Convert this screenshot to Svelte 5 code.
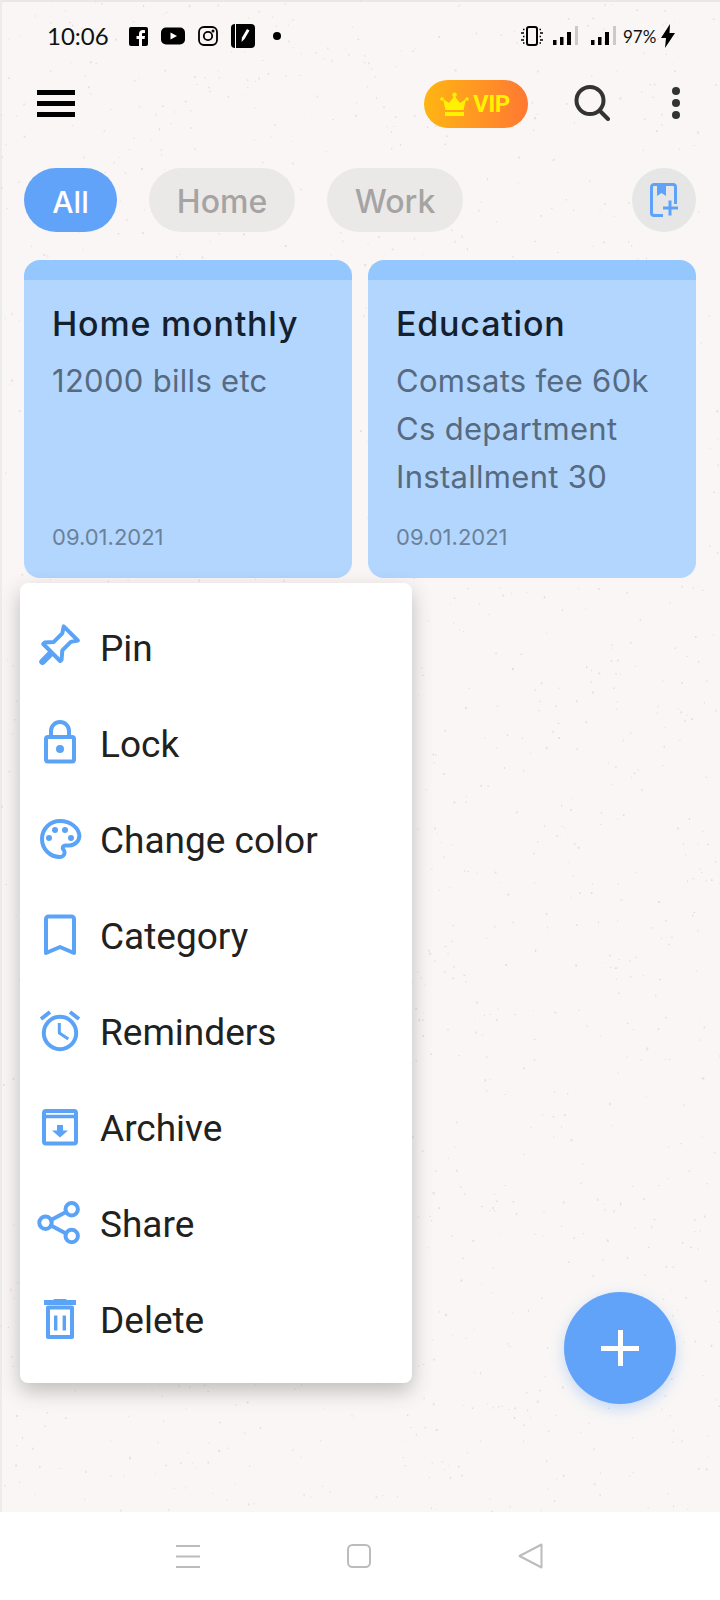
<script>
  let s = 12345;
  const r = () => ((s = (s * 16807) % 2147483647) - 1) / 2147483646;
  function speck(n, size) {
    let d = '';
    for (let i = 0; i < n; i++) {
      const x = (r() * 720).toFixed(1), y = (r() * 1512).toFixed(1);
      const w = (size * (0.6 + r())).toFixed(1), h = (size * (0.6 + r() * 1.4)).toFixed(1);
      d += `M${x} ${y}h${w}v${h}h-${w}z`;
    }
    return d;
  }
  const grey = speck(1500, 1.1);
  const pink = speck(300, 1.3);
  const rows = ['Pin', 'Lock', 'Change color', 'Category', 'Reminders', 'Archive', 'Share', 'Delete'];
</script>

<div class="page">
  <div class="paper">
    <svg class="speckle" width="720" height="1512" viewBox="0 0 720 1512" aria-hidden="true">
      <path d={grey} fill="#e2dedb" />
      <path d={pink} fill="#efdfdf" />
    </svg>

    <div class="status">
      <div class="status-side">
        <span class="time">10:06</span>
        <svg class="s-fb" width="19" height="19" viewBox="0 0 19 19"><rect width="19" height="19" rx="2" fill="#000"/><path d="M13 19v-7h2.600l.4-3h-3V7.300c0-.9.300-1.400 1.500-1.400H16V3.200c-.5-.1-1.300-.2-2.200-.2-2.300 0-3.800 1.400-3.800 3.900V9H7.500v3H10v7z" fill="#fff"/></svg>
        <svg class="s-yt" width="24" height="18" viewBox="0 0 24 18"><rect width="24" height="17" y=".5" rx="5" fill="#000"/><path d="M9.500 5.500 16 9l-6.500 3.500z" fill="#fff"/></svg>
        <svg class="s-ig" width="20" height="20" viewBox="0 0 20 20" fill="none" stroke="#000" stroke-width="1.800"><rect x="1" y="1" width="18" height="18" rx="5"/><circle cx="10" cy="10" r="4.200"/><circle cx="15" cy="5" r=".6" fill="#000"/></svg>
        <svg class="s-note" width="24" height="24" viewBox="0 0 24 24"><rect width="24" height="24" rx="4" fill="#000"/><path d="M4.500 0v24" stroke="#fff" stroke-width="1"/><path d="M10.500 18l.5-4.500 5-8.500 2.500 1.500-5 8.500z" fill="#fff"/></svg>
        <span class="s-dot"></span>
      </div>
      <div class="status-side">
        <svg class="s-vib" width="24" height="20" viewBox="0 0 24 20" fill="none" stroke="#000"><rect x="7" y="1" width="10" height="18" rx="2" stroke-width="2"/><path d="M3 3.500h1.500M1 7h3M3 10.500h1.500M1 14h3M3 17h1.500M19.500 3.500H21M20 7h3M19.500 10.500H21M20 14h3M19.500 17H21" stroke-width="1.500"/></svg>
        <svg class="s-sig1" width="26" height="20" viewBox="0 0 26 20"><path d="M0 14h3.500v5H0zM7 11h3.500v8H7zM14 6h4v13h-4z" fill="#000"/><rect x="22" y="0" width="3" height="19" fill="#ccc9c7"/></svg>
        <svg class="s-sig2" width="26" height="20" viewBox="0 0 26 20"><path d="M0 14h3.500v5H0zM7 11h3.500v8H7zM14 6h4v13h-4z" fill="#000"/><rect x="22" y="0" width="3" height="19" fill="#ccc9c7"/></svg>
        <span class="pct">97%</span>
        <svg class="s-bolt" width="14" height="24" viewBox="0 0 14 24"><path d="M9 0 0 14h5l-1 10 10-15H8.500z" fill="#000"/></svg>
      </div>
    </div>

    <div class="appbar">
      <div class="burger"><i></i><i></i><i></i></div>
      <div class="vip">
        <svg width="29" height="25" viewBox="0 0 29 25"><path d="M14.500 4 20 11l6-4-2.500 11h-18L3 7l6 4z" fill="#fff200"/><circle cx="14.500" cy="2.800" r="2.300" fill="#fff200"/><circle cx="2" cy="7" r="1.800" fill="#fff200"/><circle cx="27" cy="7" r="1.800" fill="#fff200"/><rect x="5" y="20" width="19" height="4" fill="#fff200"/></svg>
        <span>VIP</span>
      </div>
      <svg class="search" width="36" height="36" viewBox="0 0 36 36" fill="none" stroke="#333" stroke-width="4" stroke-linecap="round"><circle cx="16" cy="15.500" r="13.500"/><path d="M26 26l8 8"/></svg>
      <div class="more"><i></i><i></i><i></i></div>
    </div>

    <div class="chips">
      <span class="chip on c-all">All</span>
      <span class="chip c-home">Home</span>
      <span class="chip c-work">Work</span>
      <span class="chip-add">
        <svg width="28" height="34" viewBox="0 0 28 34" fill="none" stroke="#5ea3f8" stroke-width="3"><path d="M13 32.500H4a2.500 2.500 0 0 1-2.500-2.500V4A2.500 2.500 0 0 1 4 1.500h19A2.500 2.500 0 0 1 25.500 4v17"/><path d="M7 2h9v11l-4.500-3L7 13z" fill="#5ea3f8" stroke="none"/><path d="M13 25h15M20 17.500v15"/></svg>
      </span>
    </div>

    <div class="cards">
      <article class="card">
        <h2>Home monthly</h2>
        <p>12000 bills etc</p>
        <time>09.01.2021</time>
      </article>
      <article class="card">
        <h2>Education</h2>
        <p>Comsats fee 60k<br />Cs department<br />Installment 30</p>
        <time>09.01.2021</time>
      </article>
    </div>

    <ul class="menu">
      {#each rows as label, i}
        <li>
          <svg class="ico" width="48" height="48" viewBox="0 0 48 48" fill="none" stroke="#5aa3f7" stroke-width="4" stroke-linecap="round" stroke-linejoin="round">
            {#if i === 0}
              <g transform="translate(15.700 29.500) rotate(45)">
                <path d="M-10-27H10L6-21V-9L12-2V0H-12V-2L-6-9V-21Z"/>
                <path d="M0 2V13" stroke-width="6.500"/>
              </g>
            {:else if i === 1}
              <rect x="10" y="18" width="28" height="24.500" rx="2"/>
              <path d="M15 18v-6a9 9 0 0 1 18 0v6"/>
              <circle cx="24" cy="30" r="4" fill="#5aa3f7" stroke="none"/>
            {:else if i === 2}
              <path d="M24 6C13.900 6 6 14 6 24S13.900 42 24 42c2.500 0 4.600-2 4.600-4.500 0-1.200-.5-2.200-1.200-3-.7-.9-.8-2.100-.2-3 .5-.7 1.300-1.100 2.200-1.100h4c5.500 0 10-4.500 10-9.700C43 13 34.500 6 24 6z"/>
              <g fill="#5aa3f7" stroke="none"><circle cx="13" cy="23" r="3"/><circle cx="19" cy="15" r="3"/><circle cx="29" cy="15" r="3"/><circle cx="35" cy="23" r="3"/></g>
            {:else if i === 3}
              <path d="M10 42V8a2.500 2.500 0 0 1 2.500-2.500h23A2.500 2.500 0 0 1 38 8v34L24 36z"/>
            {:else if i === 4}
              <circle cx="24" cy="26" r="16.200"/>
              <path d="M5 12l9-7M43 12l-9-7" stroke-linecap="butt"/>
              <path d="M23.300 16v10l9 6" stroke-width="3" stroke-linecap="butt"/>
            {:else if i === 5}
              <rect x="8" y="8" width="32" height="32.500" rx="2"/>
              <path d="M8 13.500h32" stroke-width="3.500"/>
              <path d="M21 22h6v5.500h5l-8 7-8-7h5z" fill="#5aa3f7" stroke="none"/>
            {:else if i === 6}
              <circle cx="35.700" cy="10.300" r="6.200"/>
              <circle cx="9.500" cy="23.700" r="6.200"/>
              <circle cx="35.700" cy="37" r="6.200"/>
              <path d="M15 21l15-8M15 26.500l15 8" />
            {:else}
              <path d="M8 7.500h32" stroke-width="5" stroke-linecap="butt"/>
              <path d="M17 6c0-1.500 1-2 2-2h10c1 0 2 .5 2 2z" fill="#5aa3f7" stroke="none"/>
              <path d="M12 12.500h24V42H12z"/>
              <path d="M19.700 20.500v15M28.300 20.500v15" stroke-width="3.400" stroke-linecap="butt"/>
            {/if}
          </svg>
          <span>{label}</span>
        </li>
      {/each}
    </ul>

    <div class="fab"><i></i><i></i></div>
  </div>

  <nav class="nav">
    <svg width="24" height="23" viewBox="0 0 24 23" stroke="#bcbcbc" stroke-width="2"><path d="M0 1h24M0 11.500h24M0 22h24"/></svg>
    <svg width="24" height="24" viewBox="0 0 24 24" fill="none" stroke="#bcbcbc" stroke-width="2"><rect x="1" y="1" width="22" height="22" rx="4.500"/></svg>
    <svg width="25" height="26" viewBox="0 0 25 26" fill="none" stroke="#bcbcbc" stroke-width="2" stroke-linejoin="round"><path d="M1.500 13 23.500 1.500v23z"/></svg>
  </nav>
</div>

<style>
  :global(body) { margin: 0; background: #f9f6f5; }
  * { box-sizing: border-box; }
  i { display: block; }

  .page {
    position: relative;
    width: 720px;
    height: 1600px;
    display: flex;
    flex-direction: column;
    overflow: hidden;
    font-family: Inter, "Noto Sans", sans-serif;
  }
  .paper {
    position: relative;
    flex: 1;
    min-height: 0;
    background: #f9f6f5;
    border-top: 2px solid #e8e8e8;
    border-left: 2px solid #ececec;
  }
  .speckle { position: absolute; left: -2px; top: -2px; }

  .status {
    position: relative;
    height: 68px;
    margin-bottom: 2px;
    display: flex;
    align-items: center;
    justify-content: space-between;
    padding: 0 45px 0 45px;
  }
  .status-side { display: flex; align-items: center; }
  .time {
    width: 62px;
    font: 400 24px/1 Lato, sans-serif;
    color: #111;
    margin-right: 20px;
  }
  .s-fb, .s-yt, .s-ig { margin-right: 13px; }
  .s-note { margin-right: 18px; }
  .s-dot { width: 8px; height: 8px; border-radius: 50%; background: #000; }
  .s-vib { margin-right: 9px; }
  .s-sig1 { margin-right: 12px; }
  .s-sig2 { margin-right: 6px; }
  .pct { font: 400 17px/1 Lato, sans-serif; color: #111; margin-right: 5px; width: 33px; }

  .appbar {
    position: relative;
    height: 62px;
    display: flex;
    align-items: center;
    padding: 0 40px 0 35px;
  }
  .burger { width: 38px; display: flex; flex-direction: column; gap: 6px; margin-right: auto; }
  .burger i { height: 5px; background: #000; }
  .vip {
    width: 104px;
    height: 48px;
    margin-top: 2px;
    border-radius: 24px;
    background: linear-gradient(90deg, #ffb513, #ff7832);
    display: flex;
    align-items: center;
    padding-left: 16px;
    gap: 4px;
    color: #fff200;
    font: 700 24px/1 Roboto, sans-serif;
    letter-spacing: -0.5px;
  }
  .search { margin: 0 62px 0 46px; }
  .more { width: 8px; display: flex; flex-direction: column; gap: 4px; }
  .more i { height: 8px; border-radius: 50%; background: #333; }

  .chips {
    position: relative;
    margin-top: 34px;
    padding: 0 24px 0 22px;
    display: flex;
    gap: 32px;
  }
  .chip {
    height: 64px;
    text-align: center;
    border-radius: 32px;
    background: #ebe9e8;
    color: #a5a4a3;
    font: 500 32px/68px Inter, sans-serif;
  }
  .chip.on { background: #62a3fa; color: #fff; font-size: 30px; }
  .c-all { width: 93px; }
  .c-home { width: 146px; }
  .c-work { width: 136px; }
  .chip-add {
    margin-left: auto;
    width: 64px;
    height: 64px;
    border-radius: 50%;
    background: #e7e6e6;
    display: flex;
    align-items: center;
    justify-content: center;
  }

  .cards {
    position: relative;
    margin-top: 28px;
    padding: 0 22px;
    display: grid;
    grid-template-columns: 328px 328px;
    gap: 16px;
  }
  .card {
    height: 318px;
    border-radius: 16px;
    background: #b3d6fe;
    border-top: 20px solid #93c7fe;
    padding: 20px 28px 0;
    display: flex;
    flex-direction: column;
  }
  h2 { margin: 0; font: 500 34px/48px Inter, sans-serif; letter-spacing: 0.8px; color: #14202e; }
  p { margin: 9px 0 0; font: 400 31px/48px Inter, sans-serif; letter-spacing: 0.3px; color: #566a80; }
  time { margin-top: auto; margin-bottom: 27px; font: 400 22px/28px Inter, sans-serif; color: #6b8199; }

  .menu {
    position: relative;
    list-style: none;
    margin: 5px 0 0 18px;
    padding: 16px 0 14px 16px;
    width: 392px;
    height: 800px;
    background: #fff;
    border-radius: 8px;
    box-shadow: 0 8px 20px rgba(60, 60, 60, 0.3);
  }
  li { height: 96px; display: flex; align-items: center; gap: 16px; }
  li span { font: 400 37px/1 Roboto, sans-serif; color: #212121; position: relative; top: 1px; }

  .fab {
    position: absolute;
    left: 562px;
    top: 1290px;
    width: 112px;
    height: 112px;
    border-radius: 50%;
    background: #62a3fa;
    box-shadow: 0 5px 14px rgba(98, 163, 250, 0.35);
  }
  .fab i { position: absolute; background: #fff; }
  .fab i:first-child { left: 37px; right: 37px; top: 53.5px; height: 5px; }
  .fab i:last-child { left: 53.5px; width: 5px; top: 38px; bottom: 38px; }

  .nav {
    height: 88px;
    background: #fff;
    display: flex;
    align-items: center;
    padding: 0 177px 0 176px;
    justify-content: space-between;
  }
</style>
